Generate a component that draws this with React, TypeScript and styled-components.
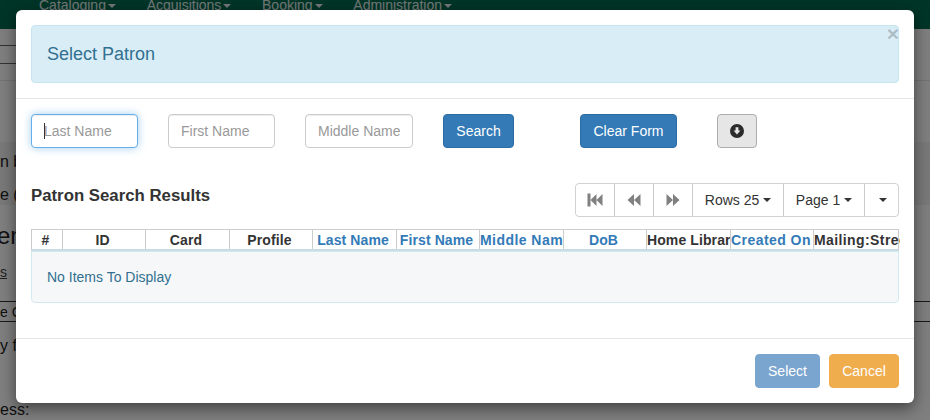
import React from "react";
import styled, { createGlobalStyle } from "styled-components";

const Global = createGlobalStyle`
  html, body { margin: 0; padding: 0; background: #fff; }
  body { font-family: "Liberation Sans", Arial, sans-serif; font-size: 14px; color: #333; overflow: hidden; }
  * { box-sizing: border-box; }
`;

const Viewport = styled.div`
  position: relative;
  width: 930px;
  height: 420px;
  overflow: hidden;
`;

const Page = styled.div`
  display: flex;
  flex-direction: column;
  height: 420px;
  overflow: hidden;
`;

const Nav = styled.nav`
  flex: 0 0 29px;
  background: #006b50;
  display: flex;
  align-items: flex-start;
  gap: 30.7px;
  padding-left: 39px;
  overflow: hidden;
`;

const NavItem = styled.span`
  margin-top: -5px;
  font-size: 14px;
  line-height: 20px;
  color: #fff;
  opacity: 0.9;
  white-space: nowrap;
`;

const Caret = styled.span<{ $color?: string }>`
  display: inline-block;
  width: 0;
  height: 0;
  margin-left: 2px;
  vertical-align: middle;
  border-top: 4px solid ${(p) => p.$color ?? "currentColor"};
  border-left: 4px solid transparent;
  border-right: 4px solid transparent;
`;

const TopBlock = styled.div`
  flex: 0 0 113px;
  padding-top: 16px;
`;

const TopField = styled.div`
  width: 24px;
  height: 19px;
  border-top: 1px solid #666;
  border-bottom: 1px solid #666;
`;

const TopRule = styled.div`
  margin-top: 16px;
  height: 1px;
  background: #e6e6e6;
`;

const Band = styled.div`
  flex: 0 0 60px;
  background: #f3f3f3;
  padding-top: 10px;
  display: flex;
  flex-direction: column;
  gap: 13px;
`;

const BackText = styled.div`
  font-size: 16px;
  line-height: 20px;
  white-space: nowrap;
  color: #222;
`;

const BackHeading = styled.div`
  margin-top: 16px;
  margin-left: -3px;
  font-size: 24px;
  line-height: 30px;
  white-space: nowrap;
  color: #222;
`;

const BackLink = styled.div`
  margin-top: 11px;
  font-size: 14px;
  line-height: 20px;
  color: #444;
  text-decoration: underline;
`;

const BackBox = styled.div`
  margin-top: 19px;
  height: 21px;
  border-top: 1px solid #333;
  border-bottom: 1px solid #333;
  font-size: 14px;
  line-height: 20px;
  color: #222;
`;

const BackSpaced = styled(BackText)<{ $top: number }>`
  margin-top: ${(p) => p.$top}px;
`;

const Backdrop = styled.div`
  position: absolute;
  inset: 0;
  background: rgba(0, 0, 0, 0.5);
`;

const Modal = styled.div`
  position: absolute;
  left: 16px;
  top: 10px;
  width: 898px;
  height: 393px;
  background: #fff;
  border-radius: 6px;
  box-shadow: 0 5px 15px rgba(0, 0, 0, 0.5);
  display: flex;
  flex-direction: column;
`;

const Header = styled.div`
  padding: 15px;
  border-bottom: 1px solid #e5e5e5;
`;

const TitleAlert = styled.div`
  position: relative;
  height: 58px;
  background: #d9edf7;
  border: 1px solid #c5e6f0;
  border-radius: 4px;
  padding-left: 15px;
  display: flex;
  align-items: center;
  font-size: 18px;
  color: #31708f;
`;

const Close = styled.span`
  position: absolute;
  right: -1px;
  top: -1px;
  font-size: 21px;
  line-height: 17px;
  font-weight: 700;
  color: #000;
  opacity: 0.2;
  text-shadow: 0 1px 0 #fff;
`;

const Body = styled.div`
  flex: 1;
  padding: 15px 15px 0;
  display: flex;
  flex-direction: column;
`;

const SearchRow = styled.div`
  display: flex;
  align-items: center;
  height: 34px;
`;

const InputWrap = styled.div<{ $w: number; $mr: number }>`
  position: relative;
  width: ${(p) => p.$w}px;
  margin-right: ${(p) => p.$mr}px;
`;

const Input = styled.input<{ $focus?: boolean }>`
  display: block;
  width: 100%;
  height: 34px;
  padding: 6px 12px;
  font: 14px "Liberation Sans", Arial, sans-serif;
  color: #555;
  background: #fff;
  border-radius: 4px;
  outline: none;
  border: 1px solid ${(p) => (p.$focus ? "#66afe9" : "#ccc")};
  box-shadow: ${(p) =>
    p.$focus
      ? "inset 0 1px 1px rgba(0,0,0,.075), 0 0 8px rgba(102,175,233,.6)"
      : "inset 0 1px 1px rgba(0,0,0,.075)"};
  &::placeholder { color: #999; opacity: 1; }
`;

const CaretBar = styled.span`
  position: absolute;
  left: 13px;
  top: 9px;
  width: 1px;
  height: 16px;
  background: #333;
`;

const Btn = styled.button<{ $kind: "primary" | "grey" | "select" | "cancel"; $w: number; $mr?: number }>`
  flex: 0 0 ${(p) => p.$w}px;
  width: ${(p) => p.$w}px;
  height: 34px;
  margin-right: ${(p) => p.$mr ?? 0}px;
  padding: 0;
  font: 14px "Liberation Sans", Arial, sans-serif;
  border-radius: 4px;
  display: inline-flex;
  align-items: center;
  justify-content: center;
  ${(p) =>
    p.$kind === "primary"
      ? "background:#337ab7;border:1px solid #2e6da4;color:#fff;"
      : p.$kind === "grey"
      ? "background:#e6e6e6;border:1px solid #adadad;color:#333;"
      : p.$kind === "select"
      ? "background:#7aa5cf;border:1px solid #7aa5cf;color:#fff;"
      : "background:#f0ad4e;border:1px solid #f0ad4e;color:#fff;"}
`;

const ResultsBar = styled.div`
  display: flex;
  justify-content: space-between;
  align-items: flex-start;
  margin-top: 35px;
`;

const ResultsTitle = styled.h3`
  margin: 3px 0 0;
  font-size: 16.8px;
  line-height: 20px;
  font-weight: 700;
  color: #333;
`;

const Pager = styled.div`
  display: flex;
  height: 34px;
  border: 1px solid #d2d2d2;
  border-radius: 4px;
  background: #fff;
`;

const PagerBtn = styled.div<{ $w: number; $last?: boolean }>`
  width: ${(p) => p.$w}px;
  display: flex;
  align-items: center;
  justify-content: center;
  gap: 2px;
  color: #333;
  font-size: 14px;
  white-space: nowrap;
  border-right: ${(p) => (p.$last ? "none" : "1px solid #ccc")};
`;

const GridHead = styled.div`
  display: grid;
  grid-template-columns: 31px 83px 84px 83px 84px 83px 84px 83px 84px 83px 86px;
  height: 22px;
  margin-top: 12px;
  border: 1px solid #ccc;
  border-bottom: 2px solid #c9dbe3;
`;

const HeadCell = styled.div<{ $link?: boolean; $left?: boolean; $last?: boolean; $track: number }>`
  overflow: hidden;
  white-space: nowrap;
  text-align: ${(p) => (p.$left ? "left" : "center")};
  padding: ${(p) => (p.$left ? "0" : "0 3px 0 0")};
  border-right: ${(p) => (p.$last ? "none" : "1px solid #ccc")};
  font-size: 14px;
  line-height: 20px;
  font-weight: 700;
  letter-spacing: ${(p) => p.$track}px;
  color: ${(p) => (p.$link ? "#337ab7" : "#333")};
`;

const EmptyAlert = styled.div`
  height: 52px;
  background: #f6f7f8;
  border: 1px solid #d3e9f1;
  border-radius: 0 0 4px 4px;
  padding-left: 15px;
  display: flex;
  align-items: center;
  color: #31708f;
  font-size: 14px;
`;

const Footer = styled.div`
  height: 65px;
  padding: 15px;
  border-top: 1px solid #e5e5e5;
  display: flex;
  justify-content: flex-end;
  gap: 9px;
`;

const Glyph = styled.svg`
  display: block;
`;

const StepBack = () => (
  <Glyph width="16" height="14" viewBox="0 0 16 14" fill="#808080">
    <rect x="0.5" y="0.5" width="3" height="13" />
    <path d="M3.5 7 9.5 1v12zM9.5 7l6-6v12z" />
  </Glyph>
);
const Back = () => (
  <Glyph width="14" height="14" viewBox="0 0 14 14" fill="#808080">
    <path d="M0.5 7 7 1v12zM7 7l6.5-6v12z" />
  </Glyph>
);
const Fwd = () => (
  <Glyph width="14" height="14" viewBox="0 0 14 14" fill="#808080">
    <path d="M13.5 7 7 1v12zM7 7 0.5 1v12z" />
  </Glyph>
);
const CircleDown = () => (
  <Glyph width="14" height="14" viewBox="0 0 14 14">
    <circle cx="7" cy="7" r="7" fill="#2b2b2b" />
    <path d="M5.6 3.2h2.8v3.4h2L7 10.6 3.6 6.6h2z" fill="#e6e6e6" />
  </Glyph>
);

const columns: { t: string; link?: boolean; left?: boolean; track: number }[] = [
  { t: "#", track: 0.1 },
  { t: "ID", track: 0.1 },
  { t: "Card", track: 0.1 },
  { t: "Profile", track: 0.1 },
  { t: "Last Name", link: true, track: 0.1 },
  { t: "First Name", link: true, track: 0.1 },
  { t: "Middle Name", link: true, left: true, track: 0.45 },
  { t: "DoB", link: true, track: 0.1 },
  { t: "Home Library", left: true, track: 0.1 },
  { t: "Created On", link: true, left: true, track: 0.45 },
  { t: "Mailing:Street", left: true, track: 0.4 },
];

export default function App() {
  return (
    <Viewport>
      <Global />
      <Page>
        <Nav>
          <NavItem>Cataloging<Caret /></NavItem>
          <NavItem>Acquisitions<Caret /></NavItem>
          <NavItem>Booking<Caret /></NavItem>
          <NavItem>Administration<Caret /></NavItem>
        </Nav>
        <TopBlock>
          <TopField />
          <TopRule />
        </TopBlock>
        <Band>
          <BackText>n b</BackText>
          <BackText>e (</BackText>
        </Band>
        <BackHeading>ent</BackHeading>
        <BackLink>s</BackLink>
        <BackBox>e C</BackBox>
        <BackSpaced $top={14}>y fo</BackSpaced>
        <BackSpaced $top={44}>ess:</BackSpaced>
      </Page>
      <Backdrop />
      <Modal>
        <Header>
          <TitleAlert>
            Select Patron
            <Close>×</Close>
          </TitleAlert>
        </Header>
        <Body>
          <SearchRow>
            <InputWrap $w={107} $mr={30}>
              <Input $focus placeholder="Last Name" />
              <CaretBar />
            </InputWrap>
            <InputWrap $w={107} $mr={30}>
              <Input placeholder="First Name" />
            </InputWrap>
            <InputWrap $w={108} $mr={30}>
              <Input placeholder="Middle Name" />
            </InputWrap>
            <Btn $kind="primary" $w={71} $mr={66}>Search</Btn>
            <Btn $kind="primary" $w={97} $mr={40}>Clear Form</Btn>
            <Btn $kind="grey" $w={40}><CircleDown /></Btn>
          </SearchRow>
          <ResultsBar>
            <ResultsTitle>Patron Search Results</ResultsTitle>
            <Pager>
              <PagerBtn $w={39}><StepBack /></PagerBtn>
              <PagerBtn $w={39}><Back /></PagerBtn>
              <PagerBtn $w={39}><Fwd /></PagerBtn>
              <PagerBtn $w={91}>Rows 25 <Caret /></PagerBtn>
              <PagerBtn $w={81}>Page 1 <Caret /></PagerBtn>
              <PagerBtn $w={33} $last><Caret /></PagerBtn>
            </Pager>
          </ResultsBar>
          <GridHead>
            {columns.map((c, i) => (
              <HeadCell key={c.t} $link={c.link} $left={c.left} $last={i === columns.length - 1} $track={c.track}>
                {c.t}
              </HeadCell>
            ))}
          </GridHead>
          <EmptyAlert>No Items To Display</EmptyAlert>
        </Body>
        <Footer>
          <Btn $kind="select" $w={65}>Select</Btn>
          <Btn $kind="cancel" $w={70}>Cancel</Btn>
        </Footer>
      </Modal>
    </Viewport>
  );
}
